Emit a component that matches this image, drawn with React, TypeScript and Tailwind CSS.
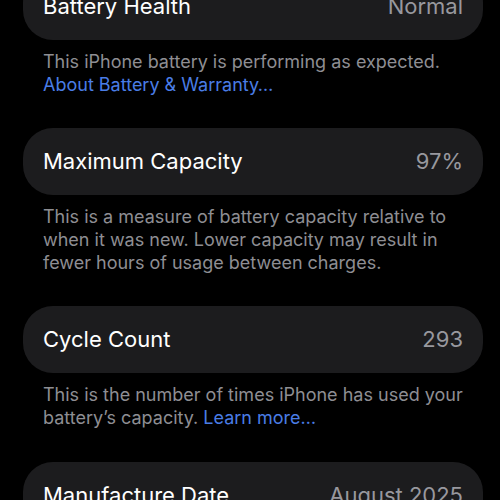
import React from "react";

function Card({ label, value }: { label: string; value: string }) {
  return (
    <div className="flex h-[67px] items-center justify-between rounded-[30px] bg-[#1c1c1e] px-5">
      <span className="text-[22px] text-white">{label}</span>
      <span className="text-[22px] text-[#98989e]">{value}</span>
    </div>
  );
}

function Footer({ children }: { children: React.ReactNode }) {
  return (
    <p className="px-5 pt-[10px] text-[18px] leading-[23px] text-[#8e8e93]">{children}</p>
  );
}

export default function App() {
  return (
    <div
      className="h-[500px] w-[500px] overflow-hidden bg-black"
      style={{ fontFamily: "Inter, 'Noto Sans', sans-serif" }}
    >
      <div className="ml-[23px] mr-[17px] mt-[-27px] flex flex-col">
        <Card label="Battery Health" value="Normal" />
        <Footer>
          This iPhone battery is performing as expected.
          <br />
          <span className="text-[#4a7de6]">About Battery &amp; Warranty…</span>
        </Footer>
        <div className="h-[32px]" />
        <Card label="Maximum Capacity" value="97%" />
        <Footer>
          This is a measure of battery capacity relative to
          <br />
          when it was new. Lower capacity may result in
          <br />
          fewer hours of usage between charges.
        </Footer>
        <div className="h-[32px]" />
        <Card label="Cycle Count" value="293" />
        <Footer>
          This is the number of times iPhone has used your
          <br />
          battery’s capacity. <span className="text-[#4a7de6]">Learn more…</span>
        </Footer>
        <div className="h-[33px]" />
        <Card label="Manufacture Date" value="August 2025" />
      </div>
    </div>
  );
}
